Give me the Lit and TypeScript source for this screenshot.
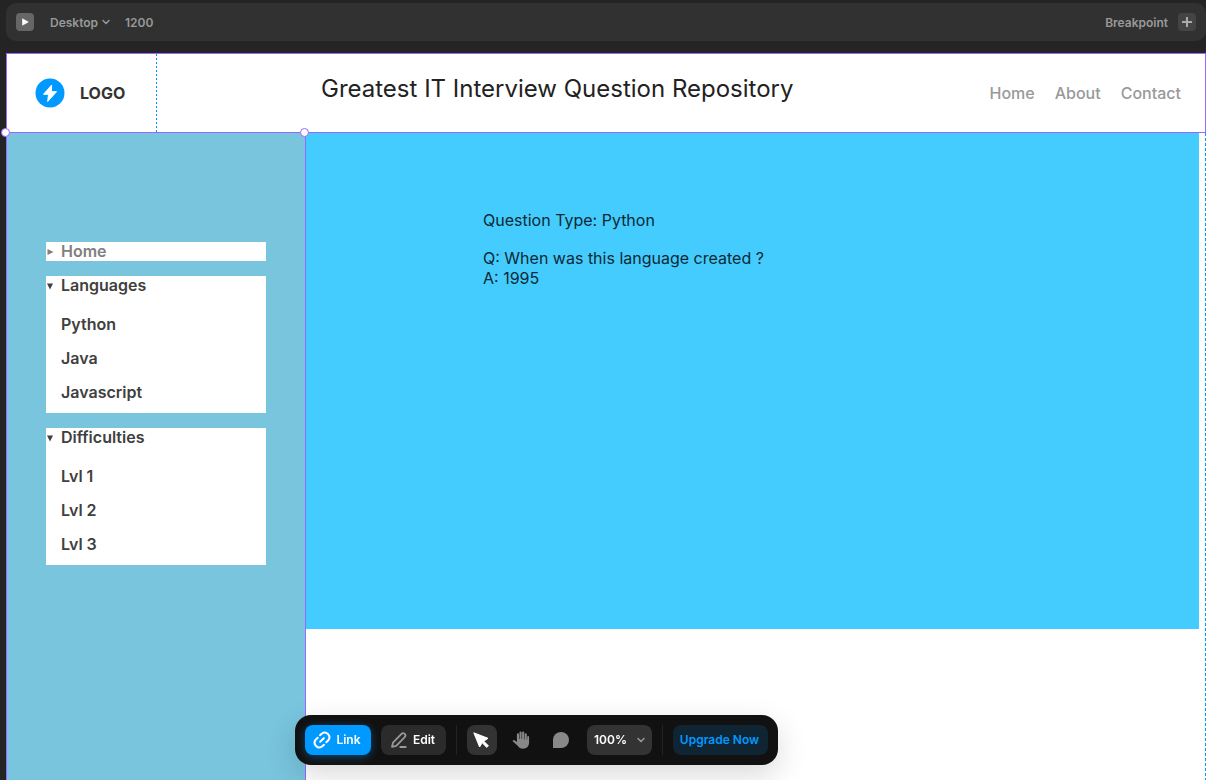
import { LitElement, html, css, svg } from "lit";
import { customElement, property } from "lit/decorators.js";

const chevron = (size: number) => html`<svg class="chevron" width=${size} height=${size} viewBox="0 0 10 10" aria-hidden="true">
  <path d="M2 3.5 5 6.5 8 3.5" fill="none" stroke="currentColor" stroke-width="1.5" stroke-linecap="round" stroke-linejoin="round" />
</svg>`;

const icons = {
  link: svg`<g fill="none" stroke="currentColor" stroke-width="2" stroke-linecap="round">
    <path d="M7 4.2 8.7 2.7a4.7 4.7 0 0 1 6.6 6.6L13.300 11.200M11 13.800 9.300 15.300a4.700 4.700 0 0 1-6.600-6.600L4.700 6.800M7.200 10.800l3.600-3.600" />
  </g>`,
  edit: svg`<g fill="none" stroke="currentColor" stroke-width="1.8" stroke-linejoin="round" stroke-linecap="round">
    <path d="M2 15.8 3 11.6 11.5 2.9a2.2 2.2 0 0 1 3.2 3.2L6.2 14.8Z" /><path d="M10.4 16.1h5.2" stroke-width="2" />
  </g>`,
  cursor: svg`<path d="M1.800 1.800 16 7.300l-4.200 2.900 4.600 4.600-1.600 1.600-4.600-4.600L7.600 16Z" fill="currentColor" stroke="currentColor" stroke-width="1" stroke-linejoin="round" />`,
  hand: svg`<path d="M4.900 11V3.400a1.050 1.050 0 0 1 2.100 0V8h.5V1.600a1.050 1.050 0 0 1 2.100 0V8h.5V1.600a1.050 1.050 0 0 1 2.100 0V8.600h.5V3.400a1.050 1.050 0 0 1 2.100 0V8.600h.4V6a.95.95 0 0 1 1.900 0v5.600c0 3.700-2.400 6.100-6 6.100-2.700 0-4.100-1-5.400-3L.9 10.600c-.7-1.200.9-2.200 1.900-1.200Z" fill="currentColor" />`,
  chat: svg`<path d="M1 17V9a8 8 0 1 1 8 8Z" fill="currentColor" />`,
};

@customElement("nav-group")
export class NavGroup extends LitElement {
  @property() label = "";
  @property({ type: Array }) items: string[] = [];
  @property({ type: Boolean }) muted = false;

  static styles = css`
    :host { display: block; }
    .group { background: #fff; color: #404040; font: 600 16px/19px "Inter", sans-serif; }
    .muted { color: #808080; }
    .heading { display: flex; align-items: center; gap: 7px; cursor: pointer; list-style: none; }
    .marker { width: 8px; height: 8px; }
    details[open] .marker { transform: rotate(90deg); }
    .items { list-style: none; margin: 0; padding: 20px 15px 11px; display: flex; flex-direction: column; gap: 15px; }
    .item { color: inherit; text-decoration: none; }
  `;

  render() {
    return html`<details class="group ${this.muted ? "muted" : ""}" ?open=${this.items.length > 0}>
      <summary class="heading">
        <svg class="marker" viewBox="0 0 8 8" aria-hidden="true"><path d="M1.500 1 7.500 4 1.500 7Z" fill="currentColor" /></svg>
        ${this.label}
      </summary>
      ${this.items.length
        ? html`<ul class="items">${this.items.map((i) => html`<li><a class="item" href="#">${i}</a></li>`)}</ul>`
        : ""}
    </details>`;
  }
}

@customElement("app-root")
export class AppRoot extends LitElement {
  static styles = css`
    :host {
      display: flex;
      flex-direction: column;
      gap: 12px;
      box-sizing: border-box;
      min-height: 100vh;
      padding: 3px 0 0 6px;
      background: #242424;
      font-family: "Inter", sans-serif;
    }
    * { box-sizing: border-box; }
    button, select { font: inherit; border: 0; margin: 0; padding: 0; cursor: pointer; }
    select { appearance: none; background: none; color: inherit; }
    a { color: inherit; text-decoration: none; }

    .breakpoints {
      display: flex; align-items: center; height: 38px; padding: 0 10px;
      border-radius: 10px; background: #313131; color: #999; font-size: 12px; font-weight: 600;
    }
    .square { display: grid; place-items: center; width: 18px; height: 18px; border-radius: 4px; background: #444; color: #aaa; }
    .play { background: #666; color: #fff; }
    .picker { display: flex; align-items: center; gap: 2px; margin: 0 14px 0 16px; }
    .add { display: flex; align-items: center; gap: 10px; margin-left: auto; }

    .frame { flex: 1; display: flex; flex-direction: column; background: #fff; }
    .site-header {
      position: relative; display: flex; align-items: stretch; height: 80px; border: 1px solid #9966ff;
    }
    .brand {
      display: flex; align-items: center; gap: 15px; width: 149px; padding-left: 28px;
      color: #333; font-size: 16px; font-weight: 700;
    }
    .guide { width: 1px; background: repeating-linear-gradient(#0099ff 0 2px, transparent 2px 4px); }
    .title { margin: 0; padding: 20px 0 0 164px; color: #222; font-size: 24px; line-height: 30px; font-weight: 400; }
    .menu { display: flex; align-items: center; gap: 20px; margin-left: auto; padding-right: 24px; color: #999; font-size: 16px; font-weight: 500; }
    .handle { position: absolute; bottom: -5px; width: 9px; height: 9px; border: 1px solid #9966ff; border-radius: 50%; background: #fff; }
    .start { left: -6px; }
    .end { left: 293px; }

    .body { flex: 1; display: grid; grid-template-columns: 300px 1fr 7px; }
    .sidebar {
      display: flex; flex-direction: column; gap: 15px; padding: 109px 39px 0;
      border: solid #9966ff; border-width: 0 1px; background: #78c5dd;
    }
    .content { align-self: start; min-height: 496px; padding: 77px 177px; background: #44ccff; color: #0d2933; font-size: 16px; line-height: 20px; }
    .content p { margin: 0; }
    .type { padding-bottom: 18px; }
    .edge { justify-self: end; width: 1px; background: repeating-linear-gradient(#0099ff 0 3px, transparent 3px 5px); }

    .toolbar {
      position: fixed; left: 295px; bottom: 15px; display: flex; align-items: center; gap: 10px;
      padding: 10px; border-radius: 16px; background: #111; color: #fff; font-size: 12px; font-weight: 600;
      box-shadow: 0 10px 30px rgba(0, 0, 0, 0.15);
    }
    .tool { display: flex; align-items: center; justify-content: center; gap: 5px; height: 30px; padding: 0 2px 1px 0; border-radius: 8px; background: none; color: #fff; }
    .wide { width: 65px; }
    .primary { width: 66px; background: #0099ff; box-shadow: 0 2px 8px rgba(0, 153, 255, 0.4); }
    .edit { background: #2b2b2b; }
    .icon { width: 30px; color: #888; }
    .active { background: #333; color: #fff; }
    .glyph { width: 18px; height: 18px; }
    .dim { color: #999; }
    .divider { width: 1px; height: 30px; background: #222; }
    .zoom { position: relative; background: #333; }
    .zoom select { width: 100%; height: 100%; padding-left: 7px; }
    .zoom .chevron { position: absolute; right: 6px; color: #999; pointer-events: none; }
    .upgrade { width: 95px; background: #0f2533; color: #0099ff; }
  `;

  private glyph(name: keyof typeof icons, extra = "") {
    return html`<svg class="glyph ${extra}" viewBox="0 0 18 18" aria-hidden="true">${icons[name]}</svg>`;
  }

  render() {
    return html`
      <div class="breakpoints">
        <button class="square play" aria-label="Preview">
          <svg width="8" height="8" viewBox="0 0 8 8"><path d="M1.500.8v6.400L7.300 4Z" fill="currentColor" stroke="currentColor" stroke-width=".6" stroke-linejoin="round" /></svg>
        </button>
        <label class="picker"><select aria-label="Breakpoint name"><option>Desktop</option></select>${chevron(10)}</label>
        <span>1200</span>
        <div class="add">
          <span id="add-label">Breakpoint</span>
          <button class="square" aria-labelledby="add-label">
            <svg width="10" height="10" viewBox="0 0 10 10"><path d="M5 0v10M0 5h10" stroke="currentColor" stroke-width="2" /></svg>
          </button>
        </div>
      </div>

      <div class="frame">
        <header class="site-header">
          <a class="brand" href="#">
            <svg width="30" height="30" viewBox="0 0 30 30" aria-hidden="true">
              <circle cx="15" cy="15" r="14.500" fill="#0099ff" />
              <path d="M16.600 7 8.500 16.300h5L12.700 23.500 21.500 13.700h-5Z" fill="#fff" stroke="#fff" stroke-width="1" stroke-linejoin="round" />
            </svg>
            LOGO
          </a>
          <div class="guide"></div>
          <h1 class="title">Greatest IT Interview Question Repository</h1>
          <nav class="menu"><a href="#">Home</a><a href="#">About</a><a href="#">Contact</a></nav>
          <span class="handle start"></span><span class="handle end"></span>
        </header>
        <div class="body">
          <aside class="sidebar">
            <nav-group label="Home" muted></nav-group>
            <nav-group label="Languages" .items=${["Python", "Java", "Javascript"]}></nav-group>
            <nav-group label="Difficulties" .items=${["Lvl 1", "Lvl 2", "Lvl 3"]}></nav-group>
          </aside>
          <main class="content">
            <p class="type">Question Type: Python</p>
            <p>Q: When was this language created ?</p>
            <p>A: 1995</p>
          </main>
          <div class="edge"></div>
        </div>
      </div>

      <div class="toolbar" role="toolbar" aria-label="Canvas tools">
        <button class="tool primary">${this.glyph("link")}Link</button>
        <button class="tool wide edit">${this.glyph("edit", "dim")}Edit</button>
        <div class="divider"></div>
        <button class="tool icon active" aria-label="Select">${this.glyph("cursor")}</button>
        <button class="tool icon" aria-label="Pan">${this.glyph("hand")}</button>
        <button class="tool icon" aria-label="Comment">${this.glyph("chat")}</button>
        <div class="tool wide zoom"><select aria-label="Zoom"><option>100%</option></select>${chevron(10)}</div>
        <div class="divider"></div>
        <button class="tool upgrade">Upgrade Now</button>
      </div>
    `;
  }
}
